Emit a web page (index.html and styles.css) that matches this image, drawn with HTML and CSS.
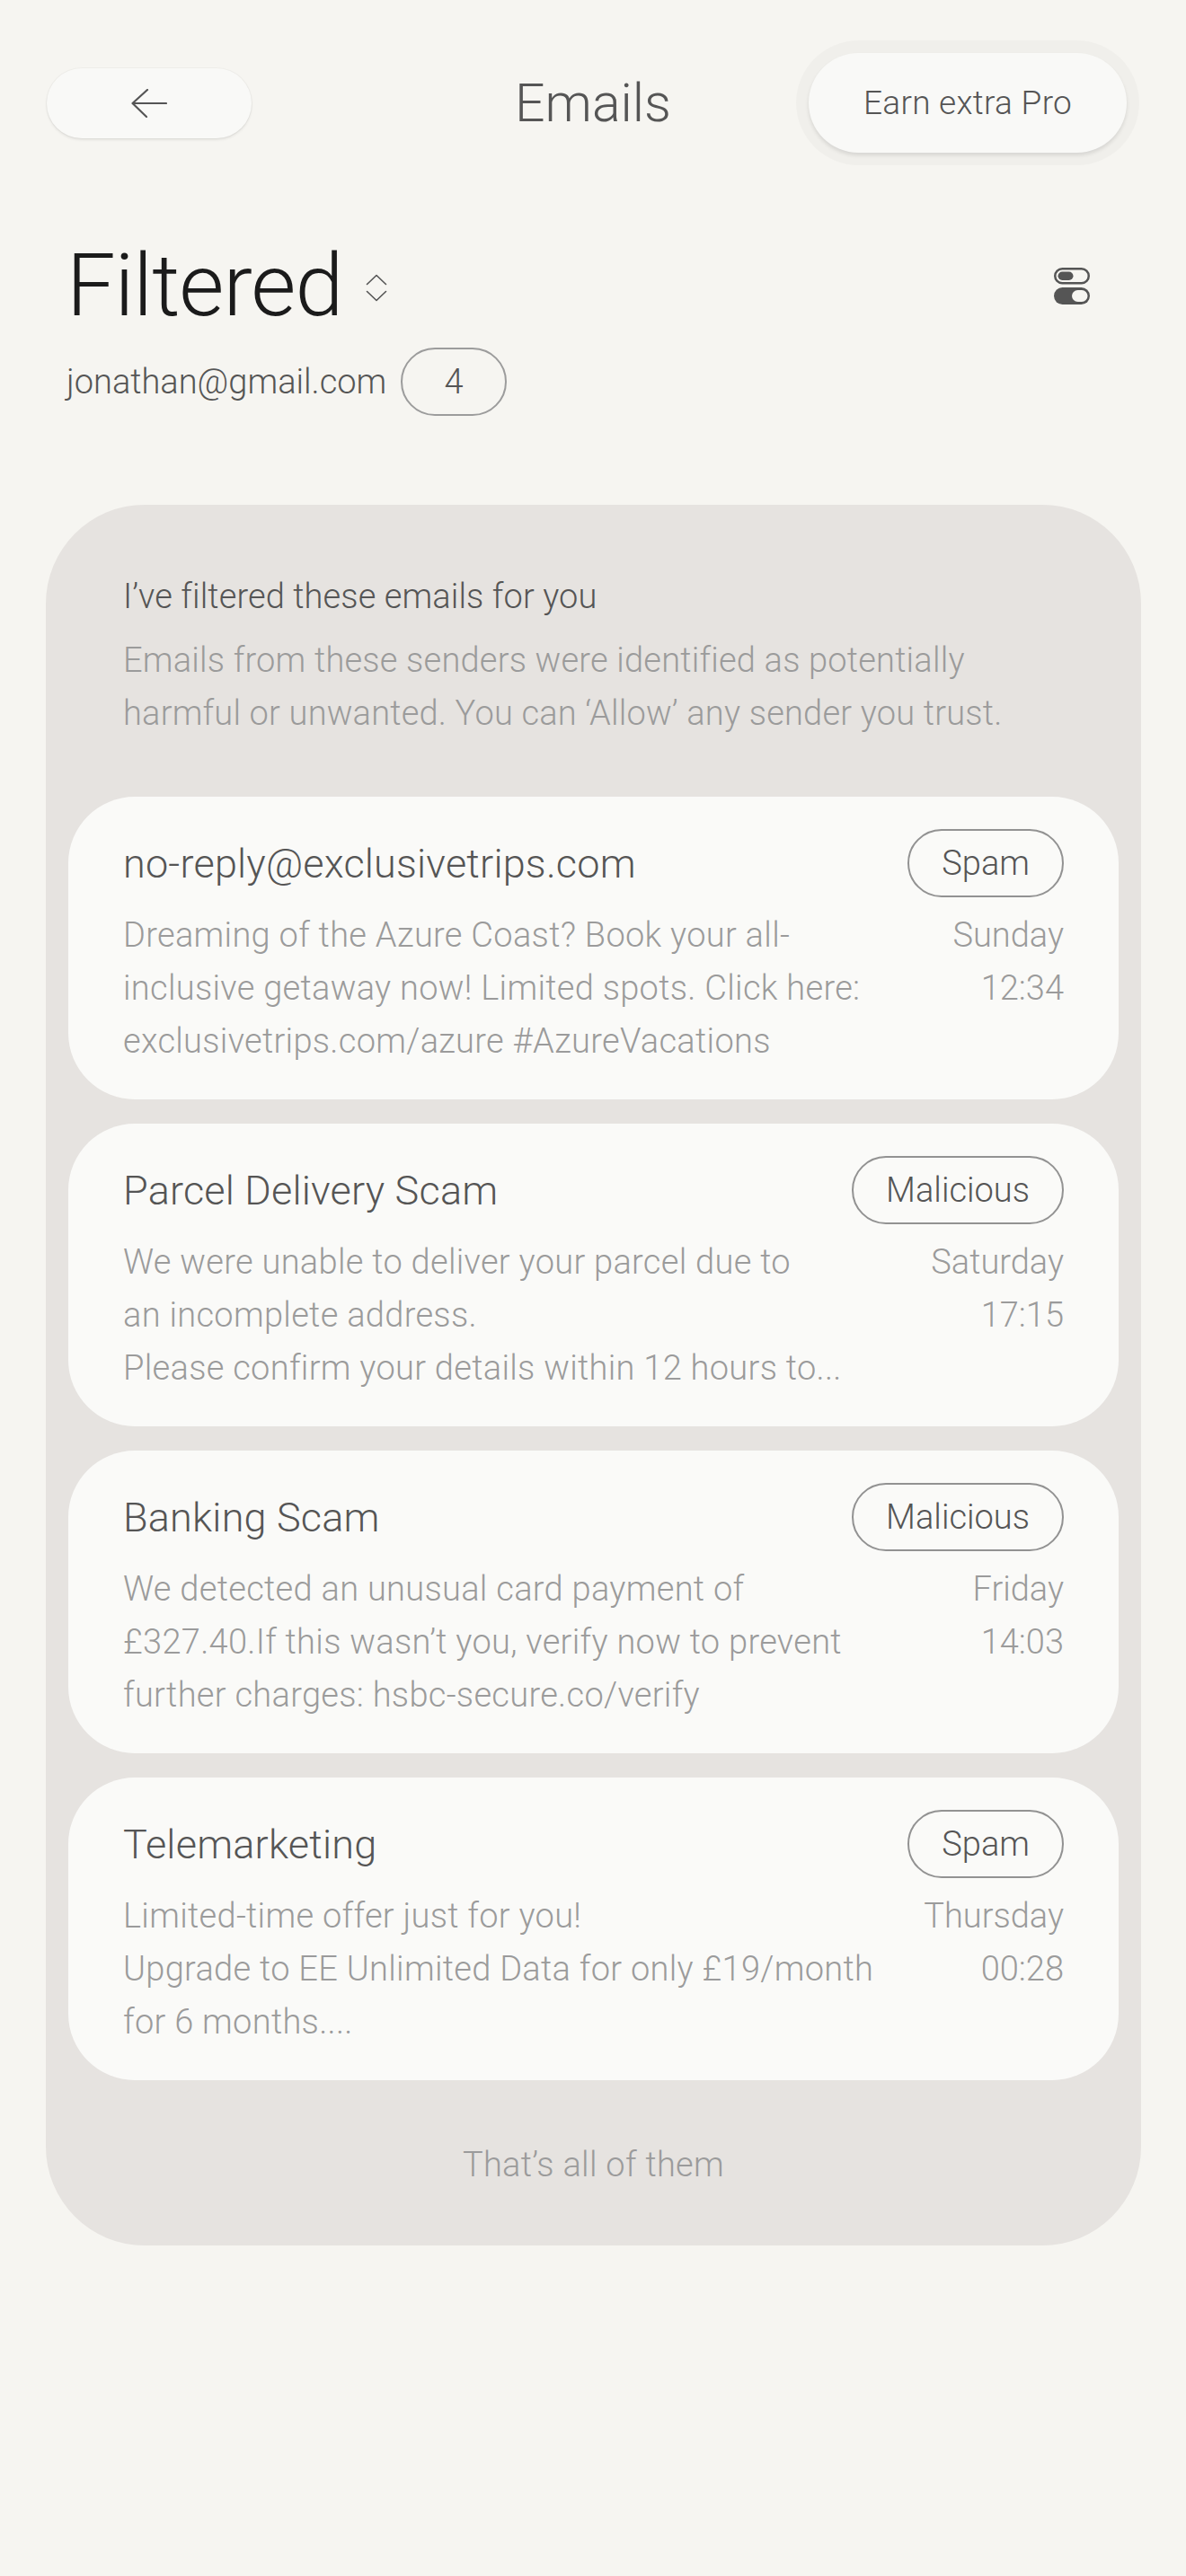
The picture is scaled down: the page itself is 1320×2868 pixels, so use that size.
FILE: index.html
```html
<!DOCTYPE html>
<html lang="en">
<head>
    <meta charset="UTF-8">
    <meta name="viewport" content="width=device-width, initial-scale=1.0">
    <title>Emails - Filtered</title>
    <link rel="stylesheet" href="styles.css">
</head>
<body>
    <header class="topbar">
        <button class="back-btn" aria-label="Back">
            <svg width="40" height="32" viewBox="0 0 40 32" fill="none" stroke="#555" stroke-width="2.2" stroke-linecap="round" stroke-linejoin="round">
                <path d="M18 1 L1.5 16 L17 31 M1.5 16 H39"/>
            </svg>
        </button>
        <h1 class="title">Emails</h1>
        <button class="pro-btn">Earn extra Pro</button>
    </header>

    <section class="heading">
        <div class="heading-row">
            <div class="filtered">
                Filtered
                <svg class="sort-icon" width="24" height="31" viewBox="0 0 24 31" fill="none" stroke="#555" stroke-width="1.6" stroke-linecap="round" stroke-linejoin="round">
                    <path d="M1.5 11.5 L12 1.5 L22.5 11.5 M1.5 19.5 L12 29.5 L22.5 19.5"/>
                </svg>
            </div>
            <svg class="toggle-icon" width="40" height="41" viewBox="0 0 40 41">
                <rect x="1.25" y="1.25" width="37.5" height="16" rx="8" fill="none" stroke="#555" stroke-width="2.5"/>
                <rect x="4.5" y="4.5" width="17" height="9.5" rx="4.75" fill="#555"/>
                <rect x="0" y="22" width="40" height="19" rx="9.5" fill="#555"/>
                <rect x="20" y="25" width="17.5" height="13" rx="6.5" fill="#f6f5f1"/>
            </svg>
        </div>
        <div class="account">
            <span class="address">jonathan@gmail.com</span>
            <span class="count">4</span>
        </div>
    </section>

    <main class="panel">
        <div class="intro">
            <h2>I’ve filtered these emails for you</h2>
            <p>Emails from these senders were identified as potentially<br>harmful or unwanted. You can ‘Allow’ any sender you trust.</p>
        </div>

        <div class="cards">
            <article class="card">
                <div class="card-head">
                    <span class="sender">no-reply@exclusivetrips.com</span>
                    <span class="tag">Spam</span>
                </div>
                <div class="card-body">
                    <p class="preview">Dreaming of the Azure Coast? Book your all-<br>inclusive getaway now! Limited spots. Click here:<br>exclusivetrips.com/azure #AzureVacations</p>
                    <p class="when">Sunday<br>12:34</p>
                </div>
            </article>

            <article class="card">
                <div class="card-head">
                    <span class="sender">Parcel Delivery Scam</span>
                    <span class="tag">Malicious</span>
                </div>
                <div class="card-body">
                    <p class="preview">We were unable to deliver your parcel due to<br>an incomplete address.<br>Please confirm your details within 12 hours to...</p>
                    <p class="when">Saturday<br>17:15</p>
                </div>
            </article>

            <article class="card">
                <div class="card-head">
                    <span class="sender">Banking Scam</span>
                    <span class="tag">Malicious</span>
                </div>
                <div class="card-body">
                    <p class="preview">We detected an unusual card payment of<br>£327.40.If this wasn’t you, verify now to prevent<br>further charges: hsbc-secure.co/verify</p>
                    <p class="when">Friday<br>14:03</p>
                </div>
            </article>

            <article class="card">
                <div class="card-head">
                    <span class="sender">Telemarketing</span>
                    <span class="tag">Spam</span>
                </div>
                <div class="card-body">
                    <p class="preview">Limited-time offer just for you!<br>Upgrade to EE Unlimited Data for only £19/month<br>for 6 months....</p>
                    <p class="when">Thursday<br>00:28</p>
                </div>
            </article>
        </div>

        <div class="done">That’s all of them</div>
    </main>
</body>
</html>
```

FILE: styles.css
```css
body {
    margin: 0;
    min-height: 2868px;
    background-color: #f6f5f1;
    font-family: Roboto, "Liberation Sans", Arial, sans-serif;
    font-weight: 300;
    letter-spacing: 0.3px;
    color: #555;
}
button {
    font: inherit;
    color: inherit;
    letter-spacing: inherit;
    border: none;
    cursor: pointer;
}

/* barra superior */
.topbar {
    display: grid;
    grid-template-columns: 1fr auto 1fr;
    align-items: center;
    padding: 59px 52px 0;
}
.back-btn {
    justify-self: start;
    width: 228px;
    height: 78px;
    border-radius: 39px;
    background-color: #f9f9f7;
    box-shadow: 0 2px 3px rgba(0,0,0,0.08), 0 0 0 1px rgba(0,0,0,0.03);
    display: flex;
    align-items: center;
    justify-content: center;
}
.title {
    margin: 0;
    font-size: 59px;
    font-weight: 300;
    letter-spacing: 0;
    color: #555;
}
.pro-btn {
    justify-self: end;
    margin-right: 14px;
    width: 354px;
    height: 111px;
    border-radius: 56px;
    background-color: #f9f9f7;
    font-size: 37px;
    box-shadow: 0 0 0 14px rgba(0,0,0,0.022), 0 3px 4px rgba(0,0,0,0.1);
}

/* titulo Filtered */
.heading {
    padding: 0 74px;
    margin-top: 100px;
}
.heading-row {
    display: flex;
    align-items: center;
    justify-content: space-between;
}
.filtered {
    display: flex;
    align-items: center;
    gap: 26px;
    font-size: 97px;
    line-height: 96px;
    letter-spacing: -1px;
    color: #1b1b1b;
}
.sort-icon {
    margin-top: 4px;
}
.toggle-icon {
    margin-right: 33px;
}
.account {
    display: flex;
    align-items: center;
    gap: 16px;
    margin-top: 21px;
}
.address {
    font-size: 38px;
    letter-spacing: 0;
}
.count {
    box-sizing: border-box;
    width: 118px;
    height: 76px;
    border: 2px solid #9c9c9c;
    border-radius: 38px;
    display: flex;
    align-items: center;
    justify-content: center;
    font-size: 38px;
}

/* panel de emails */
.panel {
    margin: 99px 50px 0 51px;
    background-color: #e6e3e0;
    border-radius: 110px;
    padding: 73px 25px 60px;
}
.intro {
    padding: 0 61px;
}
.intro h2 {
    margin: 0;
    font-size: 38px;
    line-height: 59px;
    font-weight: 300;
    letter-spacing: 0.1px;
    color: #555;
}
.intro p {
    margin: 12px 0 0;
    font-size: 38px;
    line-height: 59px;
    letter-spacing: 0.2px;
    color: #9b9b9b;
}
.cards {
    display: flex;
    flex-direction: column;
    gap: 27px;
    margin-top: 63px;
}
.card {
    background-color: #fafaf8;
    border-radius: 74px;
    padding: 36px 61px 35px;
}
.card-head {
    display: flex;
    align-items: center;
    justify-content: space-between;
}
.sender {
    font-size: 45px;
    letter-spacing: 0.2px;
    color: #555;
}
.tag {
    box-sizing: border-box;
    height: 76px;
    padding: 0 36px;
    border: 2px solid #929292;
    border-radius: 38px;
    display: flex;
    align-items: center;
    font-size: 38px;
    letter-spacing: 0;
    color: #555;
}
.card-body {
    display: flex;
    justify-content: space-between;
    gap: 30px;
    margin-top: 13px;
    font-size: 38px;
    line-height: 59px;
    letter-spacing: 0.3px;
    color: #9b9b9b;
}
.card-body p {
    margin: 0;
}
.when {
    text-align: right;
    white-space: nowrap;
    letter-spacing: 0;
}
.done {
    margin-top: 65px;
    text-align: center;
    font-size: 38px;
    line-height: 59px;
    color: #9b9b9b;
}
```
